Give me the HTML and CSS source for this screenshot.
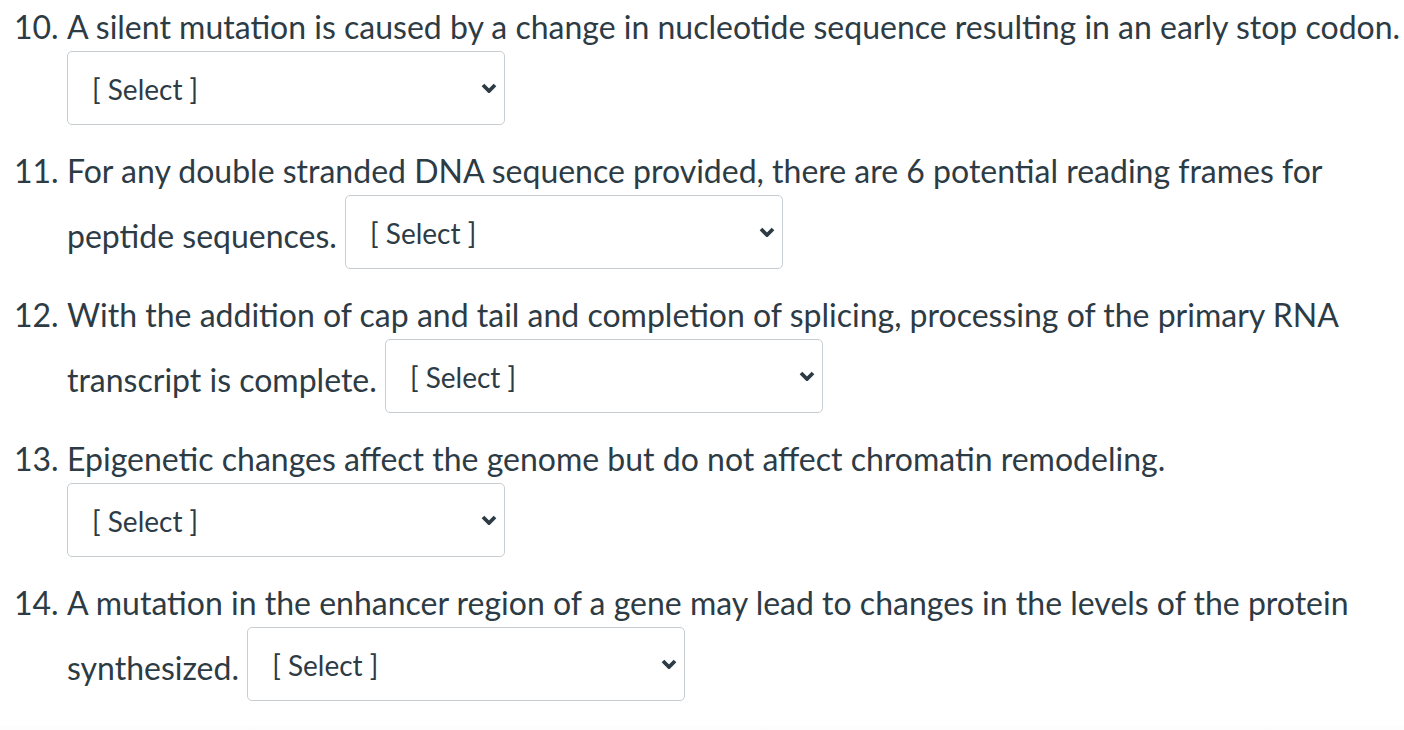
FILE: index.html
```html
<!DOCTYPE html>
<html lang="en">
<head>
    <meta charset="UTF-8">
    <title>Quiz Questions</title>
    <link rel="stylesheet" href="styles.css">
</head>
<body>
    <div class="quiz">
        <div class="question">
            <span class="num">10.</span>
            <div class="text">
                A silent mutation is caused by a change in nucleotide sequence resulting in an early stop codon.
                <span class="select-wrap"><select><option>[ Select ]</option></select><svg class="chev" viewBox="0 0 16 10"><path d="M2 2 L8 8 L14 2" /></svg></span>
            </div>
        </div>
        <div class="question">
            <span class="num">11.</span>
            <div class="text">
                For any double stranded DNA sequence provided, there are 6 potential reading frames for peptide sequences.
                <span class="select-wrap"><select><option>[ Select ]</option></select><svg class="chev" viewBox="0 0 16 10"><path d="M2 2 L8 8 L14 2" /></svg></span>
            </div>
        </div>
        <div class="question">
            <span class="num">12.</span>
            <div class="text">
                With the addition of cap and tail and completion of splicing, processing of the primary RNA transcript is complete.
                <span class="select-wrap"><select><option>[ Select ]</option></select><svg class="chev" viewBox="0 0 16 10"><path d="M2 2 L8 8 L14 2" /></svg></span>
            </div>
        </div>
        <div class="question">
            <span class="num">13.</span>
            <div class="text">
                Epigenetic changes affect the genome but do not affect chromatin remodeling.
                <span class="select-wrap"><select><option>[ Select ]</option></select><svg class="chev" viewBox="0 0 16 10"><path d="M2 2 L8 8 L14 2" /></svg></span>
            </div>
        </div>
        <div class="question">
            <span class="num">14.</span>
            <div class="text">
                A mutation in the enhancer region of a gene may lead to changes in the levels of the protein synthesized.
                <span class="select-wrap"><select><option>[ Select ]</option></select><svg class="chev" viewBox="0 0 16 10"><path d="M2 2 L8 8 L14 2" /></svg></span>
            </div>
        </div>
    </div>
    <div class="footer-band"></div>
</body>
</html>
```

FILE: styles.css
```css
body {
    margin: 0;
    background: #ffffff;
    font-family: Lato, "Open Sans", sans-serif;
    color: #2d3b45;
    overflow: hidden;
}
.quiz {
    padding: 6px 0 0 14px;
}
.question {
    display: flex;
    font-size: 32px;
    line-height: 42px;
    margin-bottom: 25px;
}
.num {
    flex: 0 0 53px;
}
.text {
    flex: 1;
    margin-right: -12px;
}
.select-wrap {
    position: relative;
    display: inline-block;
    margin-top: 3px;
    vertical-align: 4px;
}
select {
    appearance: none;
    -webkit-appearance: none;
    width: 438px;
    height: 74px;
    padding: 2px 40px 0 24px;
    border: 1px solid #c7cdd1;
    border-radius: 5px;
    background: #ffffff;
    font-family: Lato, "Open Sans", sans-serif;
    font-size: 28px;
    color: #2d3b45;
}
.chev {
    position: absolute;
    right: 8px;
    top: 32px;
    width: 16px;
    height: 10px;
    fill: none;
    stroke: #2d3b45;
    stroke-width: 3.8;
    pointer-events: none;
}
.footer-band {
    height: 40px;
    background: linear-gradient(#fdfdfd, #f8f8f8);
}
```
